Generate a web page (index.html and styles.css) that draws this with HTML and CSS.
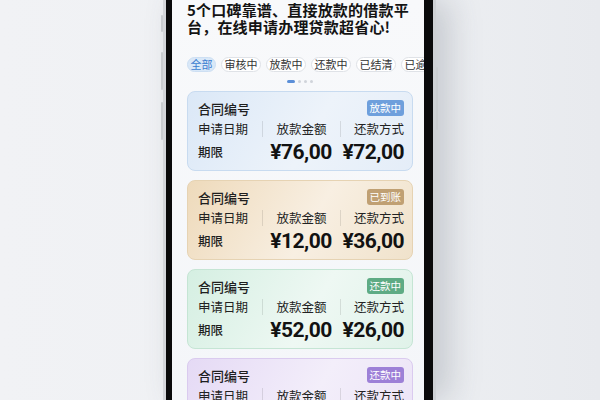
FILE: index.html
```html
<!DOCTYPE html>
<html lang="zh-CN">
<head>
<meta charset="utf-8">
<title>借款平台</title>
<link rel="stylesheet" href="styles.css">
</head>
<body>
<div class="stage">
  <div class="phone">
    <span class="side-btn sb1"></span>
    <span class="side-btn sb2"></span>
    <span class="side-btn sb3"></span>
    <span class="side-btn sb4"></span>
    <div class="screen">
      <h1 class="title">5个口碑靠谱、直接放款的借款平台，在线申请办理贷款超省心!</h1>
      <div class="tabs">
        <span class="tab active">全部</span>
        <span class="tab">审核中</span>
        <span class="tab">放款中</span>
        <span class="tab">还款中</span>
        <span class="tab">已结清</span>
        <span class="tab">已逾期</span>
      </div>
      <div class="dots"><i class="dot on"></i><i class="dot"></i><i class="dot"></i><i class="dot"></i></div>
      <div class="cards">
        <div class="card blue">
          <div class="card-head"><span class="card-title">合同编号</span><span class="badge">放款中</span></div>
          <div class="grid">
            <span class="lbl">申请日期</span><span class="lbl mid">放款金额</span><span class="lbl end">还款方式</span>
            <span class="term">期限</span><span class="amt mid">¥76,00</span><span class="amt end">¥72,00</span>
          </div>
        </div>
        <div class="card gold">
          <div class="card-head"><span class="card-title">合同编号</span><span class="badge">已到账</span></div>
          <div class="grid">
            <span class="lbl">申请日期</span><span class="lbl mid">放款金额</span><span class="lbl end">还款方式</span>
            <span class="term">期限</span><span class="amt mid">¥12,00</span><span class="amt end">¥36,00</span>
          </div>
        </div>
        <div class="card green">
          <div class="card-head"><span class="card-title">合同编号</span><span class="badge">还款中</span></div>
          <div class="grid">
            <span class="lbl">申请日期</span><span class="lbl mid">放款金额</span><span class="lbl end">还款方式</span>
            <span class="term">期限</span><span class="amt mid">¥52,00</span><span class="amt end">¥26,00</span>
          </div>
        </div>
        <div class="card purple">
          <div class="card-head"><span class="card-title">合同编号</span><span class="badge">还款中</span></div>
          <div class="grid">
            <span class="lbl">申请日期</span><span class="lbl mid">放款金额</span><span class="lbl end">还款方式</span>
            <span class="term">期限</span><span class="amt mid">¥18,00</span><span class="amt end">¥24,00</span>
          </div>
        </div>
      </div>
    </div>
  </div>
</div>
</body>
</html>
```

FILE: styles.css
```css
* { box-sizing: border-box; margin: 0; padding: 0; }
html, body { width: 600px; height: 400px; overflow: hidden; }
body {
  background: linear-gradient(90deg, #f1f2f5 0%, #eef0f3 60%, #e8eaee 100%);
  font-family: "Noto Sans CJK SC", "Noto Sans", sans-serif;
  color: #222;
}
.stage { display: flex; height: 400px; padding-left: 163px; }
.phone {
  position: relative;
  display: flex;
  height: 400px;
  background: #0a0a0b;
  border-left: 3px solid #d4d6da;
  border-right: 3px solid #cdd0d4;
  padding: 0 9px 0 6px;
  box-shadow: 14px 0 30px rgba(70, 78, 92, 0.22);
}
.side-btn { position: absolute; width: 2px; background: #c9ccd0; border-radius: 1px; }
.sb1 { left: -5px; top: 15px; height: 17px; }
.sb2 { left: -5px; top: 52px; height: 38px; }
.sb3 { left: -5px; top: 102px; height: 38px; }
.sb4 { right: -5px; top: 67px; height: 63px; }

.screen {
  width: 252px;
  height: 400px;
  overflow: hidden;
  background: linear-gradient(180deg, #f8f9fb 0%, #f4f6f9 100%);
  padding: 1px 11px 0 15px;
}
.title {
  font-size: 15px;
  line-height: 17px;
  font-weight: 700;
  color: #141414;
  letter-spacing: 0.2px;
}
.tabs { display: flex; gap: 5px; margin-top: 22px; }
.tab {
  flex-shrink: 0;
  height: 15px;
  line-height: 13px;
  padding: 0 2.5px;
  font-size: 11px;
  white-space: nowrap;
  color: #333;
  background: #fff;
  border: 1px solid #dfe2e7;
  border-radius: 8px;
}
.tab.active { background: #d9e8f8; border-color: #cddff3; color: #3b7dd0; }
.dots { display: flex; justify-content: center; align-items: center; gap: 3px; margin-top: 8px; height: 3px; }
.dot { width: 3px; height: 3px; border-radius: 50%; background: #d0d4da; }
.dot.on { width: 8px; border-radius: 2px; background: #5b8fd8; }

.cards { display: flex; flex-direction: column; gap: 9px; margin-top: 8px; }
.card {
  flex-shrink: 0;
  height: 80px;
  border: 1px solid;
  border-radius: 8px;
  padding: 7px 8px 0 10px;
}
.card-head { display: flex; justify-content: space-between; align-items: center; height: 18px; }
.card-title { font-size: 13px; font-weight: 500; color: #1f1f1f; }
.badge {
  height: 16px;
  line-height: 16px;
  padding: 0 3px;
  font-size: 10.5px;
  color: #fff;
  border-radius: 3px;
}
.grid {
  display: grid;
  grid-template-columns: 64px 78px 1fr;
  grid-template-rows: 16px 22px;
  row-gap: 4px;
  margin-top: 4px;
}
.lbl { font-size: 12.5px; line-height: 16px; color: #222; white-space: nowrap; }
.lbl.mid, .lbl.end { border-left: 1px solid rgba(0, 0, 0, 0.1); }
.mid { text-align: center; }
.end { text-align: right; }
.term { font-size: 12.5px; line-height: 22px; font-weight: 500; color: #1f1f1f; }
.amt {
  font-family: Roboto, "Liberation Sans", sans-serif;
  font-size: 21px;
  line-height: 22px;
  font-weight: 700;
  letter-spacing: -0.5px;
  color: #121212;
}

.blue { background: linear-gradient(120deg, #dbe8f7 0%, #edf3fa 55%, #e4edf8 100%); border-color: #c8dbf0; }
.blue .badge { background: #6e9fdc; }
.gold { background: linear-gradient(120deg, #eedabb 0%, #f8efe2 55%, #f0e2cb 100%); border-color: #e6d3b3; }
.gold .badge { background: #c0a073; }
.green { background: linear-gradient(120deg, #d5efe2 0%, #eef8f3 55%, #e0f2e9 100%); border-color: #c5e5d4; }
.green .badge { background: #5eab84; }
.purple { background: linear-gradient(120deg, #e5daf5 0%, #f3eefa 55%, #ebe3f6 100%); border-color: #dacbef; }
.purple .badge { background: #9d80d7; }
```
